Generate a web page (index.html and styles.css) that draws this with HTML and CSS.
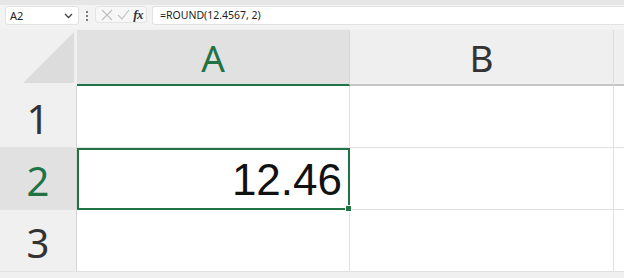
FILE: index.html
```html
<!DOCTYPE html>
<html lang="en">
<head>
  <meta charset="UTF-8">
  <title>ROUND</title>
  <link rel="stylesheet" href="styles.css">
</head>
<body>
  <div class="toolbar">
    <div class="namebox">
      <span>A2</span>
      <svg class="chev" width="9" height="6" viewBox="0 0 9 6"><path d="M1 1l3.5 3.5L8 1" fill="none" stroke="#444" stroke-width="1.3"/></svg>
    </div>
    <div class="dots"><i></i><i></i><i></i></div>
    <div class="btns">
      <svg width="12" height="12" viewBox="0 0 12 12"><path d="M1 1l10 10M11 1L1 11" stroke="#bdbdbd" stroke-width="1.1"/></svg>
      <svg width="13" height="11" viewBox="0 0 13 11"><path d="M1 6l4 4 7-9" fill="none" stroke="#bdbdbd" stroke-width="1.1"/></svg>
      <span class="fx">fx</span>
    </div>
    <div class="formula">=ROUND(12.4567, 2)</div>
  </div>

  <div class="sheet">
    <div class="corner">
      <svg width="77" height="56" viewBox="0 0 77 56"><polygon points="23,53 74,53 74,2" fill="#dcdcdc"/></svg>
    </div>
    <div class="colhead active">A</div>
    <div class="colhead">B</div>
    <div class="colhead rest"></div>

    <div class="rowhead">1</div>
    <div class="cell"></div>
    <div class="cell"></div>
    <div class="cell rest"></div>

    <div class="rowhead active">2</div>
    <div class="cell selected">12.46<span class="handle"></span></div>
    <div class="cell"></div>
    <div class="cell rest"></div>

    <div class="rowhead">3</div>
    <div class="cell"></div>
    <div class="cell"></div>
    <div class="cell rest"></div>
  </div>
</body>
</html>
```

FILE: styles.css
```css
body {
  margin: 0;
  background: #f0f0f0;
  font-family: 'Noto Sans', 'Open Sans', sans-serif;
  overflow: hidden;
}

.toolbar {
  height: 24px;
  border-top: 5px solid #e6e6e6;
  display: flex;
  align-items: flex-start;
  gap: 0;
  padding-left: 5px;
  background: #f3f3f3;
}
.namebox {
  width: 71px;
  height: 17px;
  margin-top: 1px;
  background: #fff;
  border: 1px solid #e2e2e2;
  border-radius: 3px;
  display: flex;
  align-items: center;
  justify-content: space-between;
  padding: 0 5px 0 4px;
  box-sizing: content-box;
  width: 63px;
  font-size: 11px;
  color: #222;
}
.dots {
  width: 16px;
  display: flex;
  flex-direction: column;
  align-items: center;
  gap: 2px;
  padding-top: 6px;
}
.dots i {
  width: 2px;
  height: 2px;
  background: #555;
  border-radius: 1px;
}
.btns {
  width: 50px;
  height: 17px;
  margin-top: 1px;
  border: 1px solid #e4e4e4;
  border-radius: 3px;
  background: #f7f7f7;
  display: flex;
  align-items: center;
  justify-content: space-between;
  padding: 0 3px 0 5px;
  box-sizing: border-box;
  width: 52px;
}
.fx {
  font-family: 'Liberation Serif', serif;
  font-style: italic;
  font-size: 13px;
  color: #333;
  font-weight: bold;
  letter-spacing: -0.5px;
}
.formula {
  flex: 1;
  margin-left: 5px;
  margin-top: 1px;
  height: 17px;
  background: #fff;
  border: 1px solid #e2e2e2;
  border-right: none;
  border-radius: 3px 0 0 3px;
  font-size: 10.5px;
  line-height: 17px;
  padding-left: 7px;
  color: #222;
}

.sheet {
  margin-top: 1px;
  display: grid;
  grid-template-columns: 77px 273px 264px 1fr;
  grid-template-rows: 56px 62px 62px 62px;
}
.corner {
  background: #f0f0f0;
}
.corner svg {
  display: block;
}
.colhead {
  background: #efefef;
  border-bottom: 2px solid #c6c6c6;
  border-right: 1px solid #dedede;
  display: flex;
  align-items: center;
  justify-content: center;
  font-size: 37px;
  color: #333;
  box-sizing: border-box;
}
.colhead.active {
  background: #e1e1e1;
  color: #217346;
  border-bottom-color: #217346;
  border-right-color: #d4d4d4;
}
.colhead.rest {
  border-right: none;
}
.rowhead {
  background: #f0f0f0;
  border-right: 1px solid #d6d6d6;
  border-bottom: 1px solid #e4e4e4;
  display: flex;
  align-items: center;
  justify-content: center;
  font-size: 40px;
  color: #333;
  box-sizing: border-box;
  padding-top: 4px;
}
.rowhead.active {
  background: #e1e1e1;
  color: #217346;
}
.cell {
  background: #fff;
  border-right: 1px solid #e1e1e1;
  border-bottom: 1px solid #e1e1e1;
  box-sizing: border-box;
}
.cell.rest {
  border-right: none;
}
.cell.selected {
  position: relative;
  border: 2px solid #217346;
  display: flex;
  align-items: center;
  justify-content: flex-end;
  padding: 2px 6px 0 0;
  font-family: 'Liberation Sans', Arial, sans-serif;
  font-size: 44px;
  color: #111;
}
.handle {
  position: absolute;
  right: -4px;
  bottom: -4px;
  width: 5px;
  height: 5px;
  background: #217346;
  border: 1px solid #fff;
}
```
